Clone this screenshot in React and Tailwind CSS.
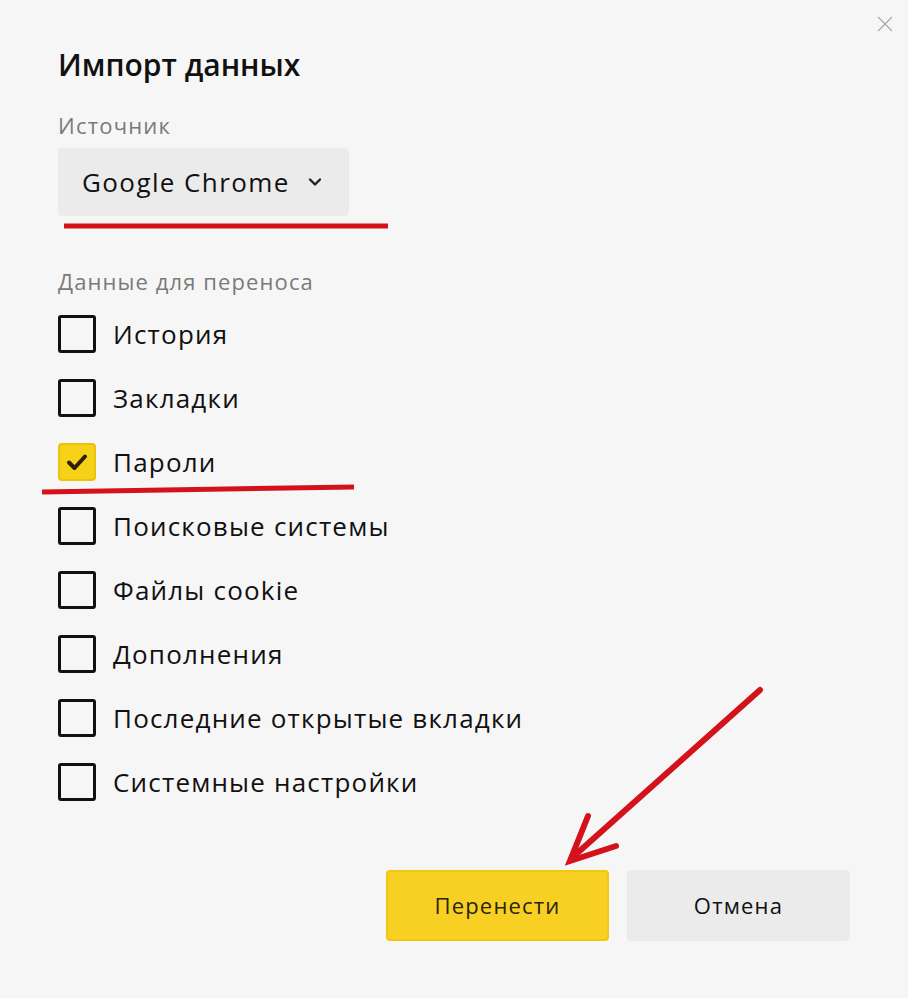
import { useState } from "react";

const items = [
  { label: "История", checked: false },
  { label: "Закладки", checked: false },
  { label: "Пароли", checked: true },
  { label: "Поисковые системы", checked: false },
  { label: "Файлы cookie", checked: false },
  { label: "Дополнения", checked: false },
  { label: "Последние открытые вкладки", checked: false },
  { label: "Системные настройки", checked: false },
];

const Checkbox = ({ checked, onChange, label }) => (
  <label className="flex items-center h-[64px] cursor-pointer">
    <span
      onClick={onChange}
      className={
        checked
          ? "flex items-center justify-center w-[38px] h-[38px] rounded-[4px] bg-[#f7d117] border-[2px] border-[#ecc30c]"
          : "flex items-center justify-center w-[38px] h-[38px] rounded-[3px] border-[3px] border-[#111]"
      }
    >
      {checked && (
        <svg width="24" height="20" viewBox="0 0 24 20" fill="none">
          <path d="M4 10.5 L9.5 16 L20 4.5" stroke="#2b2106" strokeWidth="4" strokeLinecap="round" strokeLinejoin="round" />
        </svg>
      )}
    </span>
    <span className="ml-[17px] text-[26px] tracking-[1.2px] text-[#111] leading-none">{label}</span>
  </label>
);

export default function App() {
  const [state, setState] = useState(items);

  const toggle = (i) =>
    setState((s) => s.map((it, j) => (j === i ? { ...it, checked: !it.checked } : it)));

  return (
    <div
      className="relative w-[908px] h-[998px] bg-[#f7f6f6] overflow-hidden"
      style={{ fontFamily: '"Open Sans", "Noto Sans", sans-serif' }}
    >
      <button className="absolute right-[15px] top-[16px] w-[16px] h-[16px]">
        <svg width="16" height="16" viewBox="0 0 16 16">
          <path d="M1 1 L15 15 M15 1 L1 15" stroke="#a8a8a8" strokeWidth="1.2" />
        </svg>
      </button>

      <div className="pl-[58px] pt-[45px]">
        <h1 className="text-[30px] font-semibold text-[#111] leading-[40px]">Импорт данных</h1>

        <p className="mt-[25px] text-[22px] tracking-[1.2px] text-[#7a7a7a] leading-[30px]">Источник</p>

        <div className="mt-[8px] flex items-center w-[291px] h-[68px] rounded-[4px] bg-[#ebebeb] pl-[24px]">
          <span className="text-[26px] tracking-[1.4px] text-[#111] leading-none">Google Chrome</span>
          <svg className="ml-[18px]" width="14" height="10" viewBox="0 0 14 10" fill="none">
            <path d="M2 2.5 L7 7.5 L12 2.5" stroke="#222" strokeWidth="2.4" strokeLinecap="round" strokeLinejoin="round" />
          </svg>
        </div>

        <p className="mt-[50px] text-[22px] tracking-[1.1px] text-[#7a7a7a] leading-[30px]">Данные для переноса</p>

        <div className="mt-[6px] flex flex-col">
          {state.map((it, i) => (
            <Checkbox key={it.label} label={it.label} checked={it.checked} onChange={() => toggle(i)} />
          ))}
        </div>

        <div className="mt-[56px] flex justify-end pr-[58px] gap-[18px]">
          <button className="w-[223px] h-[71px] rounded-[4px] bg-[#f8d023] border-[2px] border-[#f2c70f] text-[22px] tracking-[1.2px] text-[#2a2410]">
            Перенести
          </button>
          <button className="w-[223px] h-[71px] rounded-[4px] bg-[#ebebeb] text-[22px] tracking-[1.2px] text-[#111]">
            Отмена
          </button>
        </div>
      </div>

      <svg className="absolute left-0 top-0 pointer-events-none" width="908" height="998" viewBox="0 0 908 998">
        <path d="M64 226 L388 226" stroke="#d4121c" strokeWidth="5" />
        <path d="M42 492 L354 487" stroke="#d4121c" strokeWidth="5" />
        <path d="M760 690 L574 856" stroke="#d4121c" strokeWidth="6" strokeLinecap="round" />
        <path d="M588 816 L570 861 L616 846" stroke="#d4121c" strokeWidth="6" fill="none" strokeLinecap="round" strokeLinejoin="miter" />
      </svg>
    </div>
  );
}
